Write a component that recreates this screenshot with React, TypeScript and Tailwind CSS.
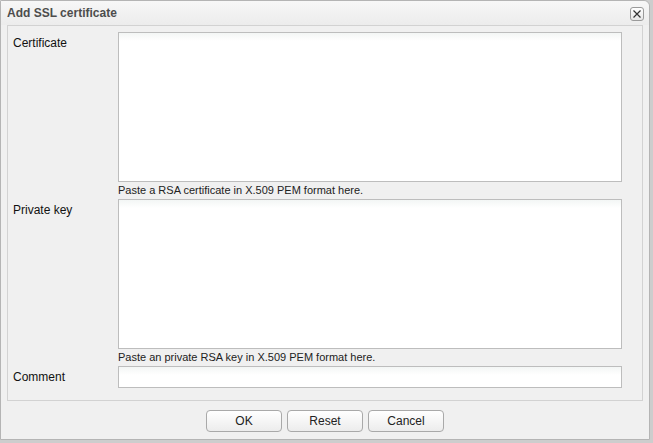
import React from "react";

export default function App() {
  const font = { fontFamily: '"Liberation Sans", Arial, sans-serif' };
  return (
    <div className="w-[653px] h-[443px] bg-[#cdcdcd] overflow-hidden" style={font}>
      <div className="w-[650px] h-[440px] bg-[#f0f0f0] border border-[#b4b4b4] rounded-tr-[6px] rounded-tl-[2px] flex flex-col">
        <div className="h-[24px] shrink-0 flex items-center justify-between pl-[6px] pr-[5px] bg-gradient-to-b from-[#f7f7f7] to-[#ececec] rounded-tr-[6px]">
          <span className="text-[12px] font-bold text-[#4d4d4d] leading-none">Add SSL certificate</span>
          <div className="w-[14px] h-[14px] mt-[2px] rounded-[3px] border border-[#9a9a9a] bg-gradient-to-b from-white to-[#e6e6e6] flex items-center justify-center">
            <svg width="10" height="10" viewBox="0 0 10 10">
              <path d="M1.5 1.5 L8.5 8.5 M8.5 1.5 L1.5 8.5" stroke="#333" strokeWidth="1.2" />
            </svg>
          </div>
        </div>
        <div className="mx-[6px] h-[376px] shrink-0 border border-[#d2d2d2] bg-[#f0f0f0] pt-[6px] pl-[5px] pr-[20px] flex flex-col">
          <div className="flex">
            <div className="w-[105px] shrink-0 text-[12px] text-[#111] pt-[2px]">Certificate</div>
            <div className="flex-1 flex flex-col">
              <div className="h-[150px] border border-[#bdbdbd] bg-gradient-to-b from-[#f3f6f5] to-white to-[8px] bg-white" />
              <div className="h-[17px] text-[11px] text-[#222] leading-[17px]">Paste a RSA certificate in X.509 PEM format here.</div>
            </div>
          </div>
          <div className="flex">
            <div className="w-[105px] shrink-0 text-[12px] text-[#111] pt-[2px]">Private key</div>
            <div className="flex-1 flex flex-col">
              <div className="h-[150px] border border-[#bdbdbd] bg-gradient-to-b from-[#f3f6f5] to-white to-[8px] bg-white" />
              <div className="h-[17px] text-[11px] text-[#222] leading-[17px]">Paste an private RSA key in X.509 PEM format here.</div>
            </div>
          </div>
          <div className="flex items-center">
            <div className="w-[105px] shrink-0 text-[12px] text-[#111]">Comment</div>
            <div className="flex-1 h-[22px] border border-[#bdbdbd] bg-gradient-to-b from-[#f3f6f5] to-white to-[8px]" />
          </div>
        </div>
        <div className="flex-1 flex justify-center items-start pt-[9px] gap-[5px]">
          {["OK", "Reset", "Cancel"].map((t) => (
            <div
              key={t}
              className="w-[76px] h-[22px] rounded-[4px] border border-[#a9a9a9] bg-gradient-to-b from-white to-[#ececec] text-[12px] text-[#222] flex items-center justify-center"
            >
              {t}
            </div>
          ))}
        </div>
      </div>
    </div>
  );
}
